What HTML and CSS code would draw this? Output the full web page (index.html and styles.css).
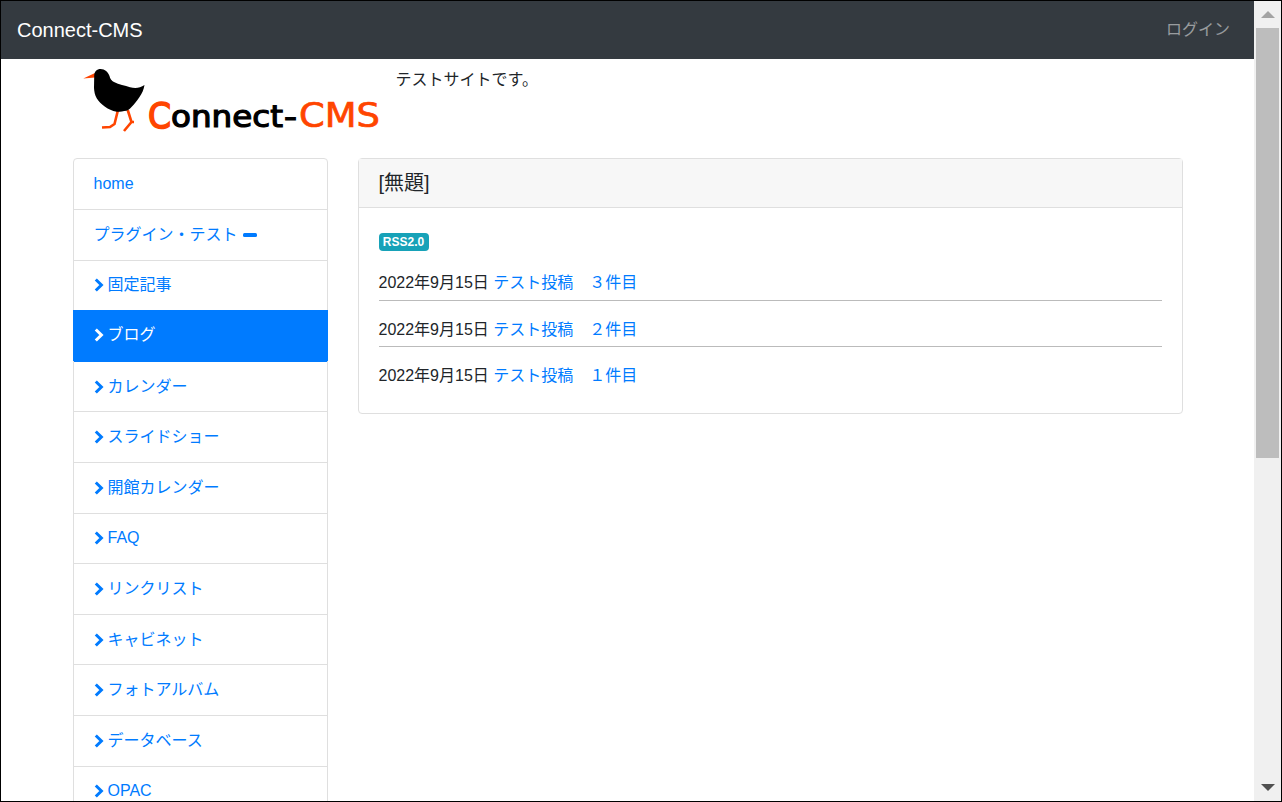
FILE: index.html
```html
<!DOCTYPE html>
<html lang="ja">
<head>
    <meta charset="UTF-8">
    <meta name="viewport" content="width=device-width, initial-scale=1.0">
    <title>Connect-CMS</title>
    <link rel="stylesheet" href="styles.css">
</head>
<body>

<div class="window">
    <div class="page">
        <nav class="navbar">
            <a class="brand" href="#">Connect-CMS</a>
            <a class="login" href="#">ログイン</a>
        </nav>

        <div class="container">
            <header class="site-header">
                <svg class="logo" viewBox="73 59 323 99" width="323" height="99">
                    <path class="bird-leg" d="M118 110 L114.5 124 L110 127 L102 127.5"/>
                    <path class="bird-leg" d="M127.7 110 L131.5 122 L124 131 M131.5 122 L134 122"/>
                    <path class="bird-beak" d="M83.3 78.4 L95 73 L95 77.4 Z"/>
                    <path d="M94.2 76 C94.2 71.5 97 69 100.5 69 C105 69 108 72 109.5 76 C110.5 79.5 111.5 80.5 114 82 C119 84.8 125 85.5 130 87.2 C135.5 88.8 140 88 144.5 85 C143.8 89.5 142 93.5 139.5 97 C137 100.8 134.5 104 131.5 107 C129.5 109 128 110.5 126.5 110.7 C123 111.2 120 111.8 116.7 111.7 C112 110.8 108.5 109 105 106.7 C101.5 104.3 98.5 101.5 96.7 98.3 C94.8 95 94.2 91.5 94 88 Z"/>
                    <text class="mark mark-c" x="148" y="128" font-size="35" textLength="23" lengthAdjust="spacingAndGlyphs">C</text>
                    <text class="mark" x="171" y="127" font-size="30" textLength="112" lengthAdjust="spacingAndGlyphs">onnect</text>
                    <text class="mark" x="284" y="127" font-size="30" textLength="13" lengthAdjust="spacingAndGlyphs">-</text>
                    <text class="mark mark-cms" x="299" y="127" font-size="33" textLength="81" lengthAdjust="spacingAndGlyphs">CMS</text>
                </svg>
                <p class="site-desc">テストサイトです。</p>
            </header>

            <div class="columns">
                <ul class="side-menu">
                    <li><a href="#">home</a></li>
                    <li><a href="#">プラグイン・テスト<svg class="icon-minus" viewBox="0 0 14 4"><rect width="14" height="4" rx="1.5"/></svg></a></li>
                    <li><a href="#"><svg class="icon-chevron" viewBox="0 0 10 14"><path d="M1.8 1.5 L7.4 7 L1.8 12.5"/></svg>固定記事</a></li>
                    <li class="active"><a href="#"><svg class="icon-chevron" viewBox="0 0 10 14"><path d="M1.8 1.5 L7.4 7 L1.8 12.5"/></svg>ブログ</a></li>
                    <li><a href="#"><svg class="icon-chevron" viewBox="0 0 10 14"><path d="M1.8 1.5 L7.4 7 L1.8 12.5"/></svg>カレンダー</a></li>
                    <li><a href="#"><svg class="icon-chevron" viewBox="0 0 10 14"><path d="M1.8 1.5 L7.4 7 L1.8 12.5"/></svg>スライドショー</a></li>
                    <li><a href="#"><svg class="icon-chevron" viewBox="0 0 10 14"><path d="M1.8 1.5 L7.4 7 L1.8 12.5"/></svg>開館カレンダー</a></li>
                    <li><a href="#"><svg class="icon-chevron" viewBox="0 0 10 14"><path d="M1.8 1.5 L7.4 7 L1.8 12.5"/></svg>FAQ</a></li>
                    <li><a href="#"><svg class="icon-chevron" viewBox="0 0 10 14"><path d="M1.8 1.5 L7.4 7 L1.8 12.5"/></svg>リンクリスト</a></li>
                    <li><a href="#"><svg class="icon-chevron" viewBox="0 0 10 14"><path d="M1.8 1.5 L7.4 7 L1.8 12.5"/></svg>キャビネット</a></li>
                    <li><a href="#"><svg class="icon-chevron" viewBox="0 0 10 14"><path d="M1.8 1.5 L7.4 7 L1.8 12.5"/></svg>フォトアルバム</a></li>
                    <li><a href="#"><svg class="icon-chevron" viewBox="0 0 10 14"><path d="M1.8 1.5 L7.4 7 L1.8 12.5"/></svg>データベース</a></li>
                    <li><a href="#"><svg class="icon-chevron" viewBox="0 0 10 14"><path d="M1.8 1.5 L7.4 7 L1.8 12.5"/></svg>OPAC</a></li>
                </ul>

                <main class="card">
                    <h5 class="card-header">[無題]</h5>
                    <div class="card-body">
                        <a class="badge" href="#">RSS2.0</a>
                        <div class="post">2022年9月15日 <a href="#">テスト投稿　３件目</a></div>
                        <div class="post">2022年9月15日 <a href="#">テスト投稿　２件目</a></div>
                        <div class="post">2022年9月15日 <a href="#">テスト投稿　１件目</a></div>
                    </div>
                </main>
            </div>
        </div>
    </div>

    <div class="scrollbar">
        <div class="scroll-btn"><span class="arrow-up"></span></div>
        <div class="scroll-thumb"></div>
        <div class="scroll-track"></div>
        <div class="scroll-btn"><span class="arrow-down"></span></div>
    </div>
</div>

</body>
</html>
```

FILE: styles.css
```css
html, body {
    margin: 0;
    height: 100%;
    overflow: hidden;
}
body {
    font-family: "Liberation Sans", "Noto Sans CJK JP", sans-serif;
    font-size: 16px;
    line-height: 24px;
    color: #212529;
    background-color: #fff;
}
a {
    color: #007bff;
    text-decoration: none;
}
.window {
    display: flex;
    width: 1282px;
    height: 802px;
    box-sizing: border-box;
    border: 1px solid #000;
    overflow: hidden;
}
.page {
    flex: 1;
    min-width: 0;
    overflow: hidden;
}

/* top bar */
.navbar {
    display: flex;
    justify-content: space-between;
    align-items: center;
    height: 58px;
    padding: 0 24px 0 16px;
    background-color: #343a40;
}
.brand {
    color: #fff;
    font-size: 20px;
}
.login {
    color: rgba(255, 255, 255, 0.5);
}

/* site header */
.container {
    width: 1140px;
    margin: 0 auto;
    padding: 0 15px;
    box-sizing: border-box;
}
.site-header {
    display: flex;
    height: 99px;
}
.logo {
    flex: none;
}
.bird-leg {
    fill: none;
    stroke: #ff4500;
    stroke-width: 2.6;
}
.bird-beak {
    fill: #ff4500;
}
.mark {
    font-family: "DejaVu Sans", sans-serif;
    fill: #000;
    stroke: #000;
    stroke-width: 1.2;
}
.mark-c {
    fill: #ff4500;
    stroke: #ff4500;
    stroke-width: 1.6;
}
.mark-cms {
    fill: #ff4500;
    stroke: #ff4500;
    stroke-width: 0.7;
}
.site-desc {
    margin: 9px 0 0;
}

/* columns */
.columns {
    display: flex;
    gap: 30px;
    align-items: flex-start;
}
.side-menu {
    flex: none;
    width: 255px;
    box-sizing: border-box;
    margin: 0;
    padding: 0;
    list-style: none;
    border: 1px solid #dfdfdf;
    border-radius: 4px;
}
.side-menu li {
    border-top: 1px solid #dfdfdf;
}
.side-menu li:first-child {
    border-top: none;
}
.side-menu a {
    display: flex;
    align-items: center;
    height: 49.6px;
    padding: 0 20px;
}
.side-menu li:first-child a {
    height: 50px;
}
.side-menu .active {
    margin: 0 -1px;
    border-top: none;
    background-color: #007bff;
}
.side-menu .active + li {
    border-top-color: #007bff;
}
.side-menu .active a {
    height: 50.6px;
    padding: 0 21px;
    color: #fff;
}
.icon-chevron {
    flex: none;
    width: 10px;
    height: 14px;
    margin-right: 4px;
    fill: none;
    stroke: currentColor;
    stroke-width: 3;
}
.icon-minus {
    flex: none;
    width: 14px;
    height: 4px;
    margin-left: 5px;
    fill: currentColor;
}

/* card */
.card {
    flex: 1;
    border: 1px solid #dfdfdf;
    border-radius: 4px;
}
.card-header {
    margin: 0;
    padding: 12px 20px;
    font-size: 20px;
    font-weight: 400;
    line-height: 24px;
    background-color: #f7f7f7;
    border-bottom: 1px solid #dfdfdf;
}
.card-body {
    padding: 25px 20px 20px;
}
.badge {
    display: block;
    width: 50px;
    height: 18px;
    margin-bottom: 4px;
    font-size: 12px;
    font-weight: 700;
    line-height: 18px;
    text-align: center;
    color: #fff;
    background-color: #17a2b8;
    border-radius: 4px;
}
.post {
    padding: 15.4px 0 4.13px;
    line-height: 25.67px;
    border-bottom: 1px solid #bbb;
}
.post:last-child {
    border-bottom: none;
}

/* scrollbar drawn as part of the window */
.scrollbar {
    flex: none;
    display: flex;
    flex-direction: column;
    width: 27px;
    background-color: #f0f0f0;
}
.scroll-btn {
    display: flex;
    align-items: center;
    justify-content: center;
    flex: none;
    height: 27px;
}
.arrow-up {
    border: 7px solid transparent;
    border-top: none;
    border-bottom: 7px solid #a3a3a3;
}
.arrow-down {
    border: 7px solid transparent;
    border-bottom: none;
    border-top: 7px solid #505050;
}
.scroll-thumb {
    flex: none;
    height: 430px;
    margin: 0 2px;
    background-color: #bdbdbd;
}
.scroll-track {
    flex: 1;
}
```
